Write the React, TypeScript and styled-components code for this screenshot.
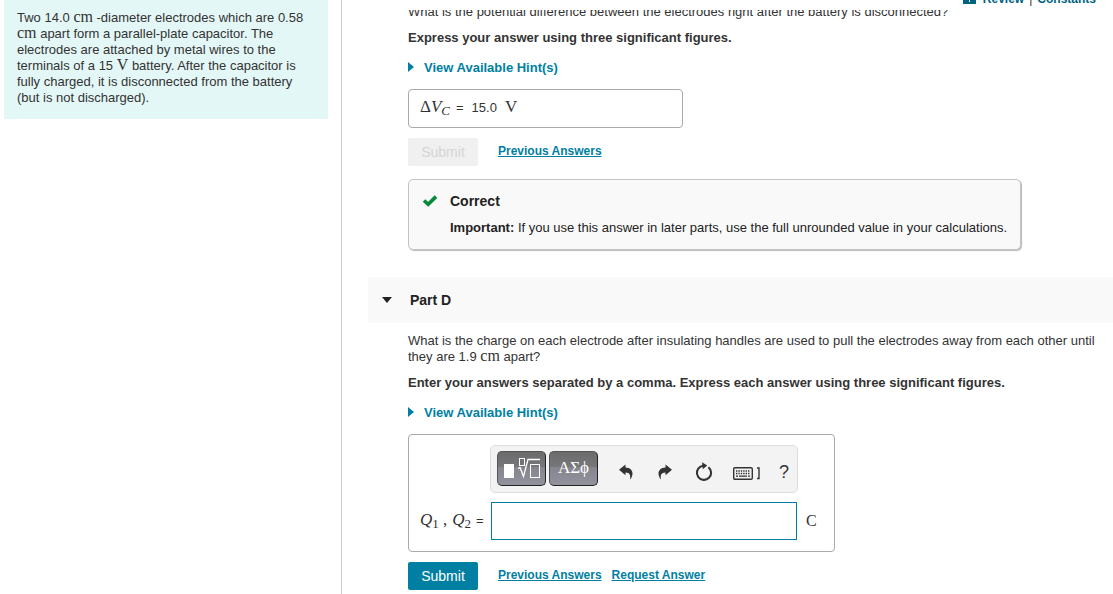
import React, { useId } from 'react';
import styled, { createGlobalStyle } from 'styled-components';

const teal = '#007fa3';
const ink = '#333333';

const GlobalStyle = createGlobalStyle`
  *, *::before, *::after { box-sizing: border-box; }
  body {
    margin: 0;
    background: #fff;
    color: ${ink};
    font: 13px/16px "Liberation Sans", Helvetica, Arial, sans-serif;
  }
  p, h2 { margin: 0; }
`;

const Page = styled.div`
  display: flex;
  min-height: 100vh;
`;

const Sidebar = styled.aside`
  flex: 0 0 342px;
  padding: 0 13px 0 4px;
  border-right: 1px solid #c3cbd8;
`;

const Problem = styled.p`
  padding: 10px 13px 13px;
  background: #e3f7f6;
`;

const Pane = styled.main`
  flex: 1;
  min-width: 0;
`;

const TopBar = styled.header`
  display: flex;
  align-items: flex-end;
  justify-content: flex-end;
  gap: 5px;
  height: 10px;
  padding: 0 17px 3px 0;
  overflow: hidden;
  font-size: 12px;
`;

const TopLink = styled.a`
  display: flex;
  align-items: flex-end;
  gap: 7px;
  color: #00637f;
  font-weight: bold;
  text-decoration: none;
`;

const Scroller = styled.div`
  overflow: hidden;
`;

const Section = styled.section<{ $scrolled?: boolean }>`
  margin-top: ${(p) => (p.$scrolled ? '-6px' : '10px')};
  padding: 0 17px 0 66px;
`;

const Instruction = styled.p`
  margin-top: 10px;
  font-weight: bold;
`;

const HintButton = styled.button`
  display: flex;
  align-items: center;
  gap: 10px;
  margin: 14px 0 13px;
  padding: 0;
  border: 0;
  background: none;
  color: ${teal};
  font: inherit;
  font-weight: bold;
  cursor: pointer;
`;

const MathText = styled.span<{ $large?: boolean }>`
  font-family: "Liberation Serif", "Times New Roman", serif;
  font-size: ${(p) => (p.$large ? 17 : 16)}px;
  line-height: 0;
  sub {
    font-size: 13px;
    line-height: 0;
    vertical-align: -3px;
  }
`;

const AnswerBox = styled.div`
  display: flex;
  align-items: baseline;
  gap: 6px;
  max-width: 275px;
  height: 39px;
  padding: 10px 11px 0;
  border: 1px solid #aaa;
  border-radius: 4px;
`;

const Value = styled.span`
  margin: 0 2px;
`;

const Actions = styled.div`
  display: flex;
  align-items: center;
  gap: 10px;
  margin-top: 10px;
`;

const SubmitButton = styled.button`
  width: 70px;
  height: 28px;
  margin-right: 10px;
  padding: 0;
  border: 0;
  border-radius: 2px;
  background: ${teal};
  color: #fff;
  font: inherit;
  font-size: 14px;
  &:disabled {
    background: #f0f0f0;
    color: #d5d5d5;
  }
`;

const ActionLink = styled.a`
  padding-bottom: 2px;
  color: ${teal};
  font-size: 12px;
  font-weight: bold;
`;

const Feedback = styled.div`
  display: grid;
  grid-template-columns: 28px auto;
  row-gap: 11px;
  align-items: center;
  width: fit-content;
  margin-top: 13px;
  padding: 13px;
  border: 1px solid #c3c3c3;
  border-radius: 5px;
  background: #f9f9f9;
  box-shadow: 1px 1px 1px #bbb;
  color: #222;
`;

const FeedbackTitle = styled.strong`
  font-size: 14px;
`;

const FeedbackText = styled.p`
  grid-column: 2;
`;

const PartHeader = styled.h2`
  margin: 27px 0 0 26px;
  background: #f9f9f9;
  font-size: 14px;
`;

const PartToggle = styled.button`
  display: flex;
  align-items: center;
  gap: 18px;
  width: 100%;
  height: 46px;
  padding: 0 14px;
  border: 0;
  background: none;
  color: #222;
  font: inherit;
  cursor: pointer;
`;

const EntryBox = styled.div`
  display: grid;
  grid-template-columns: 70px 308px auto;
  align-items: center;
  row-gap: 9px;
  max-width: 427px;
  padding: 10px 11px 11px;
  border: 1px solid #aaa;
  border-radius: 4px;
`;

const Toolbar = styled.div`
  grid-column: 2;
  display: flex;
  align-items: flex-start;
  height: 48px;
  padding: 5px 6px;
  border: 1px solid #ddd;
  border-radius: 5px;
  background: #f3f3f3;
`;

const PaletteButton = styled.button`
  display: flex;
  align-items: center;
  justify-content: center;
  width: 49px;
  height: 35px;
  margin-right: 3px;
  padding: 0 0 2px;
  border: 1px solid #555;
  border-right-color: #222;
  border-bottom-color: #222;
  border-radius: 5px;
  background: linear-gradient(#6b6b6c 0, #77777a 45%, #85858f 45%, #92929d 100%);
  color: #fff;
  font: 17px/20px "Liberation Serif", "Times New Roman", serif;
`;

const Tools = styled.div`
  display: flex;
  align-items: center;
  gap: 19px;
  height: 42px;
  padding-left: 15px;
`;

const ToolButton = styled.button`
  display: flex;
  align-items: center;
  justify-content: center;
  height: 24px;
  padding: 0;
  border: 0;
  background: none;
  color: #333;
  font: inherit;
  font-size: 18px;
  cursor: pointer;
`;

const EntryLabel = styled.label`
  grid-column: 1;
  display: flex;
  align-items: baseline;
  gap: 5px;
  white-space: nowrap;
`;

const EntryInput = styled.input`
  width: calc(100% - 2px);
  height: 38px;
  margin: 0 1px;
  padding: 0 8px;
  border: 1px solid ${teal};
  background: #fff;
  font: inherit;
  outline: 0;
`;

const Unit = styled(MathText)`
  margin-left: 8px;
`;

const Hints = () => (
  <HintButton type="button">
    <svg width="6" height="12" viewBox="0 0 6 12" aria-hidden="true">
      <path d="M0 0L6 5L0 10Z" fill={teal} />
    </svg>
    View Available Hint(s)
  </HintButton>
);

const BookIcon = () => (
  <svg width="13" height="12" viewBox="0 0 13 12" aria-hidden="true">
    <path d="M0 0H6V7.5H0ZM7 0H13V7.5H7ZM0 7H13V9H0Z" fill="#00637f" />
  </svg>
);

const CheckIcon = () => (
  <svg width="16" height="14" viewBox="0 0 16 14" aria-hidden="true">
    <path d="M2 6.5L6.2 10.3L14 2.6" fill="none" stroke="#078a3c" strokeWidth="3.6" />
  </svg>
);

const RootIcon = () => (
  <svg width="38" height="24" viewBox="0 0 38 24" aria-hidden="true">
    <rect x="1" y="8" width="10" height="14" fill="#fff" />
    <g fill="none" stroke="#fff" strokeWidth="1">
      <rect x="16.5" y="2.5" width="5" height="7" />
      <path d="M15 12.5L17 11.5L20.5 20.5L25 3.5H37" strokeWidth="1.3" />
      <rect x="27.5" y="8.5" width="9" height="13" />
    </g>
  </svg>
);

const ArrowIcon = ({ forward = false }: { forward?: boolean }) => (
  <svg width="20" height="16" viewBox="-2.5 0 20 16" aria-hidden="true">
    <path
      d="M0.5 5.7L7 0.5V3.4C11.5 3.5 14 6 14 9.4C14 12 12.8 14 11.5 15.5C12.3 11.5 11.5 8.5 7 8.5V11.2Z"
      transform={forward ? 'translate(15 0) scale(-1 1)' : undefined}
      fill="currentColor"
    />
  </svg>
);

const ResetIcon = () => (
  <svg width="20" height="20" viewBox="-1 0 20 20" aria-hidden="true">
    <path d="M13.4 5.2A7.1 7.1 0 1 1 5.5 4.6L9 3.4" fill="none" stroke="currentColor" strokeWidth="2.1" />
    <path d="M7 0.3L12.2 3.6L7.8 7.2Z" fill="currentColor" />
  </svg>
);

const KeyboardIcon = () => (
  <svg width="27" height="16" viewBox="0 -3 27 16" aria-hidden="true">
    <g fill="none" stroke="currentColor">
      <rect x="0.7" y="0.7" width="18.6" height="11.6" rx="1.2" strokeWidth="1.4" />
      <path d="M3 4H17M3 6.5H17" strokeDasharray="1.4 1" strokeWidth="1.3" />
      <path d="M3 9.2H5M6 9.2H14M15 9.2H17" strokeWidth="1.3" />
      <path d="M24 1H26V11.5H24" strokeWidth="1.4" />
    </g>
  </svg>
);

export default function App() {
  const answerId = useId();
  return (
    <>
      <GlobalStyle />
      <Page>
        <Sidebar>
          <Problem>
            Two 14.0 <MathText>cm</MathText> -diameter electrodes which are 0.58{' '}
            <MathText>cm</MathText> apart form a parallel-plate capacitor. The electrodes are attached by
            metal wires to the terminals of a 15 <MathText>V</MathText> battery. After the capacitor is
            fully charged, it is disconnected from the battery (but is not discharged).
          </Problem>
        </Sidebar>
        <Pane>
          <TopBar>
            <TopLink href="#review"><BookIcon />Review</TopLink>
            <span>|</span>
            <TopLink href="#constants">Constants</TopLink>
          </TopBar>
          <Scroller>
            <Section $scrolled>
              <p>What is the potential difference between the electrodes right after the battery is disconnected?</p>
              <Instruction>Express your answer using three significant figures.</Instruction>
              <Hints />
              <AnswerBox>
                <MathText $large>Δ<i>V</i><sub><i>C</i></sub></MathText>
                <span>=</span>
                <Value>15.0</Value>
                <MathText $large>V</MathText>
              </AnswerBox>
              <Actions>
                <SubmitButton type="button" disabled>Submit</SubmitButton>
                <ActionLink href="#previous-c">Previous Answers</ActionLink>
              </Actions>
              <Feedback>
                <CheckIcon />
                <FeedbackTitle>Correct</FeedbackTitle>
                <FeedbackText>
                  <strong>Important:</strong> If you use this answer in later parts, use the full unrounded
                  value in your calculations.
                </FeedbackText>
              </Feedback>
            </Section>
            <PartHeader>
              <PartToggle type="button" aria-expanded="true">
                <svg width="10" height="6" viewBox="0 0 10 6" aria-hidden="true">
                  <path d="M0 0H10L5 6Z" fill="#222" />
                </svg>
                Part D
              </PartToggle>
            </PartHeader>
            <Section>
              <p>
                What is the charge on each electrode after insulating handles are used to pull the
                electrodes away from each other until they are 1.9 <MathText>cm</MathText> apart?
              </p>
              <Instruction>
                Enter your answers separated by a comma. Express each answer using three significant
                figures.
              </Instruction>
              <Hints />
              <EntryBox>
                <Toolbar>
                  <PaletteButton type="button" aria-label="Templates"><RootIcon /></PaletteButton>
                  <PaletteButton type="button">ΑΣϕ</PaletteButton>
                  <Tools>
                    <ToolButton type="button" aria-label="Undo"><ArrowIcon /></ToolButton>
                    <ToolButton type="button" aria-label="Redo"><ArrowIcon forward /></ToolButton>
                    <ToolButton type="button" aria-label="Reset"><ResetIcon /></ToolButton>
                    <ToolButton type="button" aria-label="Keyboard shortcuts"><KeyboardIcon /></ToolButton>
                    <ToolButton type="button">?</ToolButton>
                  </Tools>
                </Toolbar>
                <EntryLabel htmlFor={answerId}>
                  <MathText $large><i>Q</i><sub>1</sub> ,</MathText>
                  <MathText $large><i>Q</i><sub>2</sub></MathText>
                  <span>=</span>
                </EntryLabel>
                <EntryInput id={answerId} type="text" />
                <Unit>C</Unit>
              </EntryBox>
              <Actions>
                <SubmitButton type="button">Submit</SubmitButton>
                <ActionLink href="#previous-d">Previous Answers</ActionLink>
                <ActionLink href="#request">Request Answer</ActionLink>
              </Actions>
            </Section>
          </Scroller>
        </Pane>
      </Page>
    </>
  );
}
